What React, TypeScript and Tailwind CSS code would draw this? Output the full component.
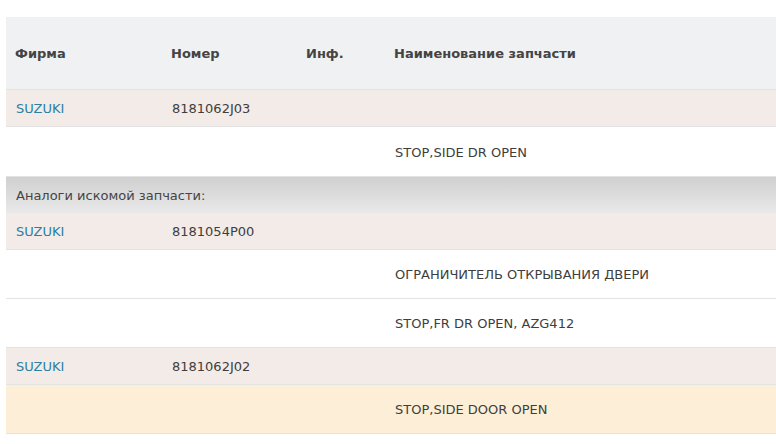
type Row =
  | { kind: 'part'; brand: string; number: string }
  | { kind: 'desc'; text: string; hl?: boolean; tall?: boolean }
  | { kind: 'group'; text: string };

const rows: Row[] = [
  { kind: 'part', brand: 'SUZUKI', number: '8181062J03' },
  { kind: 'desc', text: 'STOP,SIDE DR OPEN', tall: true },
  { kind: 'group', text: 'Аналоги искомой запчасти:' },
  { kind: 'part', brand: 'SUZUKI', number: '8181054P00' },
  { kind: 'desc', text: 'ОГРАНИЧИТЕЛЬ ОТКРЫВАНИЯ ДВЕРИ' },
  { kind: 'desc', text: 'STOP,FR DR OPEN, AZG412' },
  { kind: 'part', brand: 'SUZUKI', number: '8181062J02' },
  { kind: 'desc', text: 'STOP,SIDE DOOR OPEN', hl: true },
];

const cols = 'grid grid-cols-[156px_134px_89px_1fr] pt-[2px]';

const App = () => {
  return (
    <div className="w-[776px] h-[444px] bg-white pt-[17px] pl-[6px] overflow-hidden font-['DejaVu_Sans',Verdana,sans-serif] text-[13px] text-[#3e3e3e]">
      {/* Header */}
      <div className={`${cols} h-[73px] items-center bg-[#f0f1f3] border-b border-[#e3e3e3] font-bold text-[#444]`}>
        <div className="pl-[9px]">Фирма</div>
        <div className="pl-[9px]">Номер</div>
        <div className="pl-[10px]">Инф.</div>
        <div className="pl-[9px]">Наименование запчасти</div>
      </div>

      {rows.map((row, i) => {
        if (row.kind === 'group') {
          return (
            <div
              key={i}
              className="h-[36px] flex items-center pl-[10px] pt-[2px] bg-linear-to-b from-[#d0d0d0] via-[#dcdcdc] to-[#e9e9e9] text-[#444]"
            >
              {row.text}
            </div>
          );
        }
        if (row.kind === 'part') {
          return (
            <div key={i} className={`${cols} h-[37px] items-center bg-[#f3ebe7] border-b border-[#e3e3e3]`}>
              <div className="pl-[10px] text-[#2b80a3]">{row.brand}</div>
              <div className="pl-[10px]">{row.number}</div>
              <div />
              <div />
            </div>
          );
        }
        return (
          <div
            key={i}
            className={`${cols} ${row.tall ? 'h-[50px]' : 'h-[49px]'} items-center border-b border-[#e3e3e3] ${row.hl ? 'bg-[#fdeed7]' : 'bg-white'}`}
          >
            <div />
            <div />
            <div />
            <div className="pl-[10px]">{row.text}</div>
          </div>
        );
      })}
    </div>
  );
};

export default App;
